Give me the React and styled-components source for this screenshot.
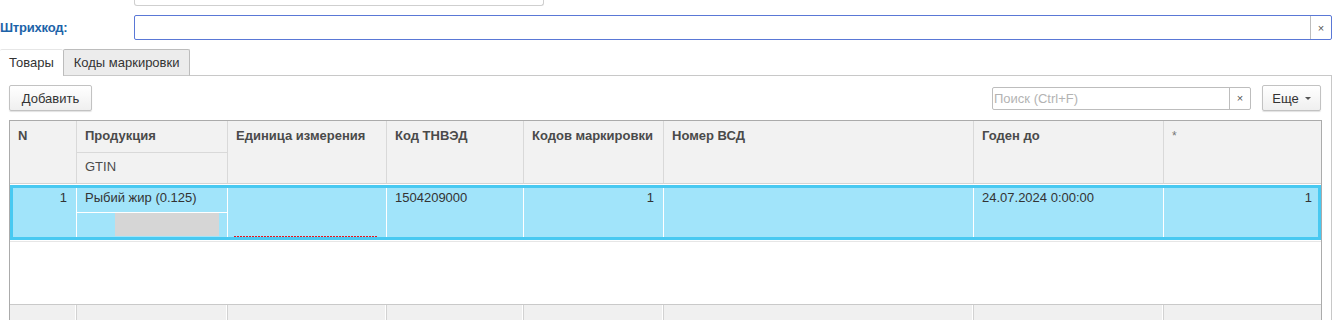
import React from 'react';
import styled, { createGlobalStyle } from 'styled-components';

const GlobalStyle = createGlobalStyle`
  html, body {
    margin: 0;
    padding: 0;
    background: #ffffff;
    overflow: hidden;
  }
  body {
    font-family: "Liberation Sans", Arial, sans-serif;
    color: #333333;
  }
`;

const COLS = '67px 151px 159px 137px 140px 310px 190px 1fr';

const Page = styled.div`
  width: 1337px;
  height: 320px;
  overflow: hidden;
`;

const TopStub = styled.div`
  margin-left: 134px;
  width: 408px;
  height: 5px;
  border: 1px solid #cfcfcf;
  border-top: none;
  border-radius: 0 0 3px 3px;
`;

const FieldRow = styled.div`
  display: flex;
  align-items: center;
  margin-top: 9px;
  width: 1332px;
`;

const FieldLabel = styled.div`
  width: 134px;
  font-size: 13px;
  font-weight: bold;
  letter-spacing: -0.2px;
  color: #1d63a8;
`;

const InputBox = styled.div`
  display: flex;
  flex: ${p => (p.$grow ? 1 : 'none')};
  width: ${p => (p.$width ? `${p.$width}px` : 'auto')};
  height: ${p => p.$height}px;
  box-sizing: border-box;
  border: 1px solid ${p => (p.$focused ? '#5a78d6' : '#bdbdbd')};
  border-radius: 2px;
  background: #fff;
`;

const InputText = styled.div`
  flex: 1;
  font-size: 13px;
  line-height: ${p => p.$height - 2}px;
  padding-left: 1px;
  color: #b3b3b3;
`;

const ClearBtn = styled.div`
  width: 20px;
  border-left: 1px solid #bdbdbd;
  display: flex;
  align-items: center;
  justify-content: center;
  font-size: 11px;
  color: #555;
`;

const TabStrip = styled.div`
  display: flex;
  margin-top: 9px;
  width: 1332px;
  height: 27px;
`;

const Tab = styled.div`
  box-sizing: border-box;
  height: 27px;
  padding: 0 ${p => (p.$active ? 9 : 10)}px;
  font-size: 13px;
  line-height: 25px;
  color: #333;
  background: ${p => (p.$active ? '#ffffff' : '#ececec')};
  border: 1px solid ${p => (p.$active ? '#e6e6e6' : '#bcbcbc')};
  border-left: ${p => (p.$active ? 'none' : '1px solid #bcbcbc')};
  border-bottom: ${p => (p.$active ? 'none' : '1px solid #c8c8c8')};
  border-right: ${p => (p.$active ? 'none' : '1px solid #bcbcbc')};
  border-radius: 2px 2px 0 0;
`;

const TabFiller = styled.div`
  flex: 1;
  border-bottom: 1px solid #c8c8c8;
`;

const TabPanel = styled.div`
  width: 1332px;
  box-sizing: border-box;
  padding: 9px 9px 0 9px;
  border-right: 1px solid #c8c8c8;
  height: 245px;
`;

const Toolbar = styled.div`
  display: flex;
  align-items: center;
  height: 26px;
`;

const Button = styled.div`
  box-sizing: border-box;
  height: 26px;
  width: ${p => p.$width}px;
  display: flex;
  align-items: center;
  justify-content: center;
  gap: 6px;
  font-size: 13px;
  color: #333;
  border: 1px solid #c2c2c2;
  border-radius: 2px;
  background: linear-gradient(#ffffff, #efefef);
  box-shadow: 0 1px 1px rgba(0, 0, 0, 0.12);
  margin-left: ${p => p.$ml || 0}px;
  margin-right: ${p => p.$mr || 0}px;
`;

const Caret = styled.span`
  width: 0;
  height: 0;
  border-left: 3px solid transparent;
  border-right: 3px solid transparent;
  border-top: 3px solid #555;
  margin-top: 1px;
`;

const Spacer = styled.div`
  flex: 1;
`;

const Table = styled.div`
  margin-top: 9px;
  border: 1px solid #ababab;
  border-bottom: none;
  height: 400px;
  display: flex;
  flex-direction: column;
`;

const HeaderGrid = styled.div`
  display: grid;
  grid-template-columns: ${COLS};
  grid-template-rows: 32px 30px;
  background: #f2f2f2;
  border-bottom: 1px solid #d4d4d4;
`;

const HeadCell = styled.div`
  grid-row: ${p => p.$row || '1 / span 2'};
  grid-column: ${p => p.$col};
  box-sizing: border-box;
  padding: 7px 8px 0 8px;
  font-size: 13px;
  font-weight: bold;
  color: #4a4a4a;
  border-right: 1px solid #d9d9d9;
  border-bottom: ${p => (p.$split ? '1px solid #d9d9d9' : 'none')};
  white-space: nowrap;
  overflow: hidden;
  ${p => p.$last && 'border-right: none;'}
  ${p => p.$sub && 'font-weight: normal; padding-top: 6px;'}
`;

const Star = styled.span`
  font-weight: normal;
  color: #777;
  font-size: 12px;
`;

const Row = styled.div`
  position: relative;
  margin-top: 1px;
  display: grid;
  grid-template-columns: ${COLS};
  grid-template-rows: 28px 27px;
  background: #a1e4fa;

  &::after {
    content: '';
    position: absolute;
    inset: 0;
    border: 3px solid #48c9f1;
    pointer-events: none;
  }
`;

const Cell = styled.div`
  grid-row: ${p => p.$row || '1 / span 2'};
  grid-column: ${p => p.$col};
  box-sizing: border-box;
  padding: 5px ${p => (p.$right ? 9 : 8)}px 0 8px;
  font-size: 13px;
  color: #333;
  text-align: ${p => (p.$right ? 'right' : 'left')};
  border-right: ${p => (p.$last ? 'none' : '1px solid #ffffff')};
  border-bottom: ${p => (p.$split ? '1px solid #ffffff' : 'none')};
  white-space: nowrap;
  position: relative;
`;

const MaskedValue = styled.div`
  position: absolute;
  left: 38px;
  top: 0;
  width: 104px;
  height: 23px;
  background: #d6d6d6;
`;

const RequiredMark = styled.div`
  position: absolute;
  left: 6px;
  right: 8px;
  bottom: 3px;
  height: 1px;
  background: repeating-linear-gradient(
    to right,
    #e8141c 0 2px,
    transparent 2px 3px
  );
`;

const RowGap = styled.div`
  height: 1px;
  background: #e6e6e6;
  margin-top: 1px;
`;

const EmptyArea = styled.div`
  height: 62px;
  border-bottom: 1px solid #c9c9c9;
`;

const FooterGrid = styled.div`
  display: grid;
  grid-template-columns: ${COLS};
  height: 40px;
  background: #f0f0f0;
`;

const FooterCell = styled.div`
  border-right: ${p => (p.$last ? 'none' : '1px solid #d2d2d2')};
  box-shadow: ${p => (p.$last ? 'none' : 'inset -1px 0 0 #ffffff')};
`;

const columns = [
  { key: 'n', title: 'N' },
  { key: 'prod', title: 'Продукция' },
  { key: 'unit', title: 'Единица измерения' },
  { key: 'tnved', title: 'Код ТНВЭД' },
  { key: 'codes', title: 'Кодов маркировки' },
  { key: 'vsd', title: 'Номер ВСД' },
  { key: 'exp', title: 'Годен до' },
  { key: 'star', title: '*' },
];

function App() {
  return (
    <Page>
      <GlobalStyle />
      <TopStub />
      <FieldRow>
        <FieldLabel>Штрихкод:</FieldLabel>
        <InputBox $grow $focused $height={25}>
          <InputText $height={25} />
          <ClearBtn>×</ClearBtn>
        </InputBox>
      </FieldRow>

      <TabStrip>
        <Tab $active>Товары</Tab>
        <Tab>Коды маркировки</Tab>
        <TabFiller />
      </TabStrip>

      <TabPanel>
        <Toolbar>
          <Button $width={83}>Добавить</Button>
          <Spacer />
          <InputBox $width={259} $height={23}>
            <InputText $height={23}>Поиск (Ctrl+F)</InputText>
            <ClearBtn>×</ClearBtn>
          </InputBox>
          <Button $width={59} $ml={11} $mr={1}>
            Еще <Caret />
          </Button>
        </Toolbar>

        <Table>
          <HeaderGrid>
            {columns.map((c, i) =>
              c.key === 'prod' ? (
                <React.Fragment key={c.key}>
                  <HeadCell $col={i + 1} $row="1" $split>
                    {c.title}
                  </HeadCell>
                  <HeadCell $col={i + 1} $row="2" $sub>
                    GTIN
                  </HeadCell>
                </React.Fragment>
              ) : (
                <HeadCell key={c.key} $col={i + 1} $last={i === columns.length - 1}>
                  {c.key === 'star' ? <Star>*</Star> : c.title}
                </HeadCell>
              )
            )}
          </HeaderGrid>

          <Row>
            <Cell $col={1} $right>1</Cell>
            <Cell $col={2} $row="1" $split>Рыбий жир (0.125)</Cell>
            <Cell $col={2} $row="2">
              <MaskedValue />
            </Cell>
            <Cell $col={3}>
              <RequiredMark />
            </Cell>
            <Cell $col={4}>1504209000</Cell>
            <Cell $col={5} $right>1</Cell>
            <Cell $col={6} />
            <Cell $col={7}>24.07.2024 0:00:00</Cell>
            <Cell $col={8} $right $last>1</Cell>
          </Row>
          <RowGap />
          <EmptyArea />
          <FooterGrid>
            {columns.map((c, i) => (
              <FooterCell key={c.key} $last={i === columns.length - 1} />
            ))}
          </FooterGrid>
        </Table>
      </TabPanel>
    </Page>
  );
}

export default App;
